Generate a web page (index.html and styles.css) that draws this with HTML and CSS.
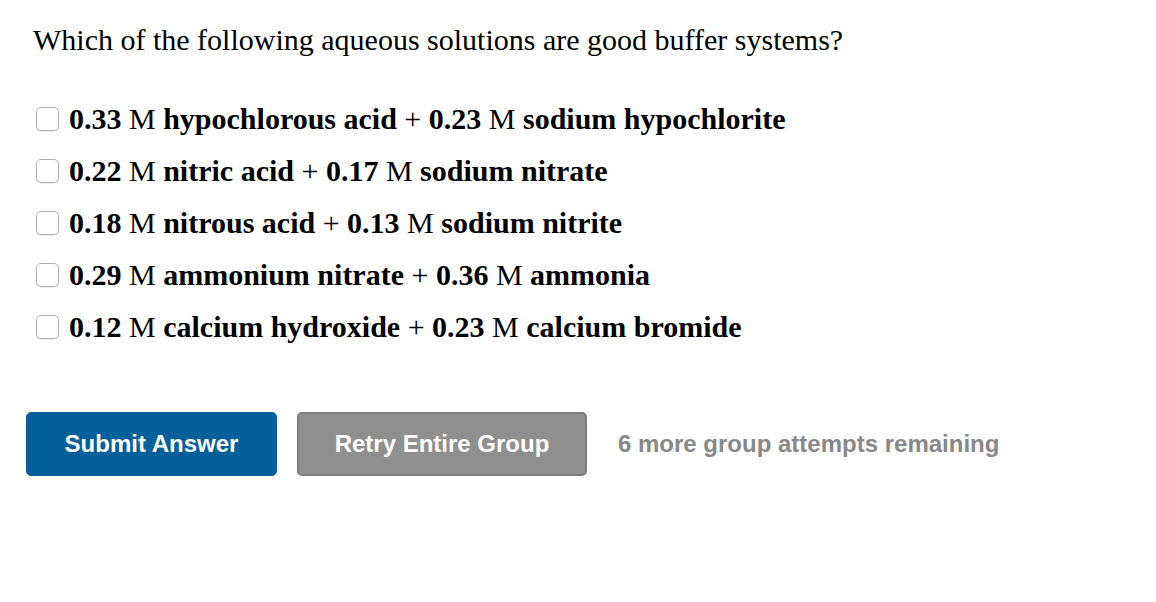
FILE: index.html
```html
<!DOCTYPE html>
<html lang="en">
<head>
<meta charset="utf-8">
<title>Buffer systems</title>
<link rel="stylesheet" href="styles.css">
</head>
<body>
<div class="question">
  <p class="prompt">Which of the following aqueous solutions are good buffer systems?</p>
  <ul class="choices">
    <li class="choice"><span class="box"></span><span class="label"><b>0.33</b> M <b>hypochlorous acid</b> + <b>0.23</b> M <b>sodium hypochlorite</b></span></li>
    <li class="choice"><span class="box"></span><span class="label"><b>0.22</b> M <b>nitric acid</b> + <b>0.17</b> M <b>sodium nitrate</b></span></li>
    <li class="choice"><span class="box"></span><span class="label"><b>0.18</b> M <b>nitrous acid</b> + <b>0.13</b> M <b>sodium nitrite</b></span></li>
    <li class="choice"><span class="box"></span><span class="label"><b>0.29</b> M <b>ammonium nitrate</b> + <b>0.36</b> M <b>ammonia</b></span></li>
    <li class="choice"><span class="box"></span><span class="label"><b>0.12</b> M <b>calcium hydroxide</b> + <b>0.23</b> M <b>calcium bromide</b></span></li>
  </ul>
  <div class="actions">
    <button class="btn btn-primary">Submit Answer</button>
    <button class="btn btn-muted">Retry Entire Group</button>
    <span class="attempts">6 more group attempts remaining</span>
  </div>
</div>
</body>
</html>
```
FILE: styles.css
```css
html, body {
  margin: 0;
  background: #ffffff;
}

body {
  font-family: "Liberation Serif", "Times New Roman", serif;
  color: #000;
}

.question {
  padding: 22px 26px 0 33px;
}

.prompt {
  margin: 0;
  font-size: 30px;
  line-height: 36px;
}

.choices {
  list-style: none;
  margin: 46px 0 0 3px;
  padding: 0;
  display: flex;
  flex-direction: column;
  gap: 22px;
}

.choice {
  display: flex;
  align-items: center;
  gap: 10px;
  font-size: 30px;
  line-height: 30px;
}

.choice b {
  font-weight: bold;
}

.box {
  width: 21px;
  height: 22px;
  border: 1px solid #b0b0b0;
  border-radius: 5px;
  background: #fff;
  box-shadow: 0 1px 1px rgba(0, 0, 0, 0.08);
  flex: none;
}

.actions {
  display: flex;
  align-items: center;
  margin: 70px 0 0 -7px;
}

.btn {
  font-family: "Liberation Sans", Arial, sans-serif;
  font-weight: bold;
  font-size: 24px;
  color: #fff;
  height: 64px;
  border-radius: 5px;
  cursor: pointer;
}

.btn-primary {
  width: 251px;
  background: #03609a;
  border: 1px solid #03609a;
}

.btn-muted {
  width: 290px;
  margin-left: 20px;
  background: #8f8f8f;
  border: 2px solid #7c7c7c;
}

.attempts {
  margin-left: 31px;
  font-family: "Liberation Sans", Arial, sans-serif;
  font-weight: bold;
  font-size: 24px;
  color: #888888;
}
```
